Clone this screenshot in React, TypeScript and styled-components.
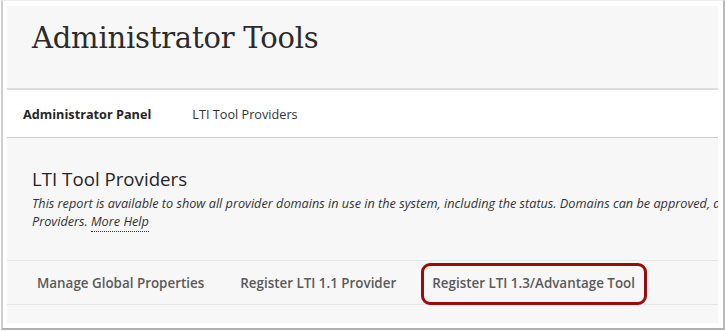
import React from "react";
import styled, { createGlobalStyle } from "styled-components";

const Global = createGlobalStyle`
  html, body { margin: 0; padding: 0; background: #ffffff; }
  body { width: 725px; height: 331px; overflow: hidden; font-family: "Open Sans", "Noto Sans", Arial, sans-serif; }
`;

const Frame = styled.div`
  margin-left: 1px;
  width: 724px;
  height: 330px;
  box-sizing: border-box;
  border-left: 2px solid #cfcfcf;
  border-right: 2px solid #b8b8b8;
  border-top: 1px solid #ececec;
  border-bottom: 2px solid #b0b0b0;
  padding: 5px 5px 5px 4px;
  background: #ffffff;
`;

const Panel = styled.div`
  height: 100%;
  background: #f7f7f7;
  overflow: hidden;
  display: flex;
  flex-direction: column;
`;

const Header = styled.header`
  flex: none;
  height: 84px;
  box-sizing: border-box;
  border-bottom: 2px solid #dcdcdc;
  padding: 12px 0 0 25px;
`;

const Title = styled.h1`
  margin: 0;
  font-family: "DejaVu Serif", "Liberation Serif", serif;
  font-weight: 400;
  font-size: 29px;
  line-height: 40px;
  color: #2b2b2b;
  letter-spacing: -0.2px;
`;

const Nav = styled.nav`
  flex: none;
  height: 48px;
  box-sizing: border-box;
  background: #ffffff;
  border-bottom: 1px solid #cdcdcd;
  display: flex;
  align-items: center;
  padding-left: 16px;
  gap: 41px;
`;

const NavItem = styled.span<{ $active?: boolean }>`
  font-size: 12.7px;
  font-weight: ${(p) => (p.$active ? 700 : 400)};
  color: ${(p) => (p.$active ? "#262626" : "#333333")};
`;

const Section = styled.section`
  flex: none;
  height: 122px;
  box-sizing: border-box;
  padding: 29px 0 0 25px;
`;

const SectionTitle = styled.h2`
  margin: 0;
  font-size: 18.7px;
  font-weight: 400;
  line-height: 24px;
  color: #262626;
`;

const Description = styled.p`
  margin: 3px 0 0;
  width: 760px;
  white-space: nowrap;
  font-size: 12.7px;
  font-style: italic;
  line-height: 18px;
  color: #333333;
`;

const HelpLink = styled.a`
  color: #333333;
  text-decoration: none;
  border-bottom: 1px dotted #333333;
  padding-bottom: 1px;
`;

const ActionBar = styled.div`
  flex: none;
  height: 45px;
  box-sizing: border-box;
  border-top: 1px solid #e6e6e6;
  border-bottom: 1px solid #e6e6e6;
  display: flex;
  align-items: center;
  padding-left: 12px;
`;

const Action = styled.button`
  position: relative;
  height: 100%;
  border: 0;
  background: transparent;
  padding: 0 18px;
  font-family: "Open Sans", "Noto Sans", Arial, sans-serif;
  font-size: 13.4px;
  font-weight: 600;
  color: #5a5a5a;
  cursor: pointer;
`;

const Highlight = styled.span`
  position: absolute;
  left: 7px;
  right: 6px;
  top: 2px;
  bottom: -1px;
  border: 3px solid #9c0b0b;
  border-radius: 9px;
  pointer-events: none;
`;

export default function App() {
  return (
    <>
      <Global />
      <Frame>
        <Panel>
          <Header>
            <Title>Administrator Tools</Title>
          </Header>
          <Nav>
            <NavItem $active>Administrator Panel</NavItem>
            <NavItem>LTI Tool Providers</NavItem>
          </Nav>
          <Section>
            <SectionTitle>LTI Tool Providers</SectionTitle>
            <Description>
              This report is available to show all provider domains in use in the system, including the status. Domains can be approved, denied, or excluded as Tool
              <br />
              Providers. <HelpLink href="#">More Help</HelpLink>
            </Description>
          </Section>
          <ActionBar>
            <Action>Manage Global Properties</Action>
            <Action>Register LTI 1.1 Provider</Action>
            <Action>
              Register LTI 1.3/Advantage Tool
              <Highlight />
            </Action>
          </ActionBar>
        </Panel>
      </Frame>
    </>
  );
}
